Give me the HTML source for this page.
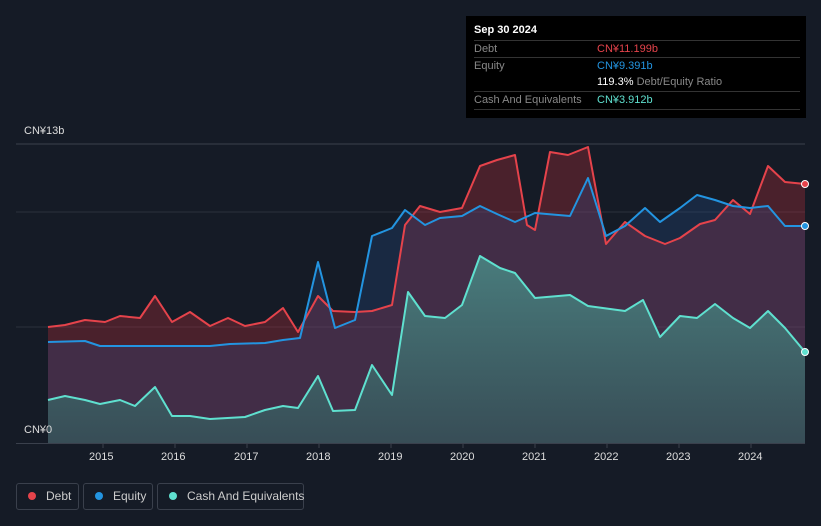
<!DOCTYPE html>
<html><head><style>
body{margin:0;background:#151b26;width:821px;height:526px;overflow:hidden;font-family:"Liberation Sans","Noto Sans CJK SC",sans-serif;position:relative}
.tip{position:absolute;left:466px;top:16px;width:340px;height:102px;background:#000;color:#ccc;font-size:11px}
.tip .r{position:absolute;left:8px;width:326px;border-top:1px solid #333;height:17px;line-height:17px}
.lbl{color:#888}
.v{position:absolute;left:123px}
.ax{position:absolute;color:#ddd;font-size:11px}
.lg{position:absolute;top:483px;height:27px;border:1px solid #3a404c;border-radius:3px;color:#ccc;font-size:12px;line-height:25px;box-sizing:border-box;white-space:nowrap}
.dot{display:inline-block;width:8px;height:8px;border-radius:50%;margin:0 10px 0 11px}
</style></head><body>
<svg width="821" height="526" style="position:absolute;left:0;top:0">
<defs><linearGradient id="cg" x1="0" y1="0" x2="0" y2="1"><stop offset="0" stop-color="#4a8a86" stop-opacity="0.85"/><stop offset="1" stop-color="#35555a" stop-opacity="0.8"/></linearGradient></defs>
<line x1="16" y1="144" x2="805" y2="144" stroke="#3a404c"/>
<line x1="16" y1="212" x2="805" y2="212" stroke="#2a303c"/>
<line x1="16" y1="327" x2="805" y2="327" stroke="#2a303c"/>
<polygon fill="rgba(200,50,60,0.3)" points="48,443 48,327 65,325 85,320 105,322 120,316 140,318 155,296 172,322 190,312 210,326 228,318 245,326 265,322 283,308 298,332 318,296 333,311 355,312 372,311 392,305 405,225 420,206 440,212 462,208 480,166 497,160 515,155 527,225 535,230 550,152 568,155 588,147 606,244 625,222 645,236 665,244 680,238 700,224 715,220 733,200 750,214 768,166 785,182 805,184 805,443"/>
<polygon fill="rgba(40,90,170,0.22)" points="48,443 48,342 85,341 100,346 130,346 160,346 210,346 230,344 265,343 283,340 300,338 318,262 335,328 355,320 372,236 392,228 405,210 425,225 440,218 462,216 480,206 497,214 515,222 535,213 570,216 588,178 606,236 625,226 645,208 660,222 680,208 697,195 715,200 733,206 750,208 768,206 785,226 805,226 805,443"/>
<polygon fill="url(#cg)" points="48,443 48,400 65,396 85,400 100,404 120,400 135,406 155,387 172,416 190,416 210,419 245,417 265,410 283,406 298,408 318,376 333,411 355,410 372,365 392,395 408,292 425,316 445,318 462,305 480,256 500,268 515,273 535,298 570,295 588,306 625,311 643,300 660,337 680,316 697,318 715,304 733,318 750,328 768,311 785,328 805,352 805,443"/>
<polyline fill="none" stroke="#e5434b" stroke-width="2" stroke-linejoin="round" points="48,327 65,325 85,320 105,322 120,316 140,318 155,296 172,322 190,312 210,326 228,318 245,326 265,322 283,308 298,332 318,296 333,311 355,312 372,311 392,305 405,225 420,206 440,212 462,208 480,166 497,160 515,155 527,225 535,230 550,152 568,155 588,147 606,244 625,222 645,236 665,244 680,238 700,224 715,220 733,200 750,214 768,166 785,182 805,184"/>
<polyline fill="none" stroke="#2394e0" stroke-width="2" stroke-linejoin="round" points="48,342 85,341 100,346 130,346 160,346 210,346 230,344 265,343 283,340 300,338 318,262 335,328 355,320 372,236 392,228 405,210 425,225 440,218 462,216 480,206 497,214 515,222 535,213 570,216 588,178 606,236 625,226 645,208 660,222 680,208 697,195 715,200 733,206 750,208 768,206 785,226 805,226"/>
<polyline fill="none" stroke="#5fe0cf" stroke-width="2" stroke-linejoin="round" points="48,400 65,396 85,400 100,404 120,400 135,406 155,387 172,416 190,416 210,419 245,417 265,410 283,406 298,408 318,376 333,411 355,410 372,365 392,395 408,292 425,316 445,318 462,305 480,256 500,268 515,273 535,298 570,295 588,306 625,311 643,300 660,337 680,316 697,318 715,304 733,318 750,328 768,311 785,328 805,352"/>
<circle cx="805" cy="184" r="3.5" fill="#e5434b" stroke="#fff" stroke-width="1"/>
<circle cx="805" cy="226" r="3.5" fill="#2394e0" stroke="#fff" stroke-width="1"/>
<circle cx="805" cy="352" r="3.5" fill="#5fe0cf" stroke="#fff" stroke-width="1"/>
<line x1="16" y1="443.5" x2="805" y2="443.5" stroke="#3a404c"/>
<g stroke="#3a404c"><line x1="103" y1="444" x2="103" y2="448"/><line x1="175" y1="444" x2="175" y2="448"/><line x1="247" y1="444" x2="247" y2="448"/><line x1="319" y1="444" x2="319" y2="448"/><line x1="391" y1="444" x2="391" y2="448"/><line x1="463" y1="444" x2="463" y2="448"/><line x1="535" y1="444" x2="535" y2="448"/><line x1="607" y1="444" x2="607" y2="448"/><line x1="679" y1="444" x2="679" y2="448"/><line x1="751" y1="444" x2="751" y2="448"/></g>
</svg>
<div class="ax" style="left:24px;top:125px">CN¥13b</div>
<div class="ax" style="left:24px;top:424px">CN¥0</div>
<div class="ax" style="left:89px;top:451px">2015</div>
<div class="ax" style="left:161px;top:451px">2016</div>
<div class="ax" style="left:234px;top:451px">2017</div>
<div class="ax" style="left:306px;top:451px">2018</div>
<div class="ax" style="left:378px;top:451px">2019</div>
<div class="ax" style="left:450px;top:451px">2020</div>
<div class="ax" style="left:522px;top:451px">2021</div>
<div class="ax" style="left:594px;top:451px">2022</div>
<div class="ax" style="left:666px;top:451px">2023</div>
<div class="ax" style="left:738px;top:451px">2024</div>
<div class="tip">
<div style="position:absolute;left:8px;top:8px;color:#fff;font-weight:bold;font-size:11px">Sep 30 2024</div>
<div class="r" style="top:24px"><span class="lbl">Debt</span><span class="v" style="color:#e5434b">CN¥11.199b</span></div>
<div class="r" style="top:41px"><span class="lbl">Equity</span><span class="v" style="color:#2394e0">CN¥9.391b</span></div>
<div class="r" style="top:58px;border-top:none"><span class="v" style="color:#fff">119.3% <span class="lbl">Debt/Equity Ratio</span></span></div>
<div class="r" style="top:75px;border-bottom:1px solid #333"><span class="lbl">Cash And Equivalents</span><span class="v" style="color:#5fe0cf">CN¥3.912b</span></div>
</div>
<div class="lg" style="left:16px;width:63px"><span class="dot" style="background:#e5434b"></span>Debt</div>
<div class="lg" style="left:83px;width:70px"><span class="dot" style="background:#2394e0"></span>Equity</div>
<div class="lg" style="left:157px;width:147px"><span class="dot" style="background:#5fe0cf"></span>Cash And Equivalents</div>
</body></html>
